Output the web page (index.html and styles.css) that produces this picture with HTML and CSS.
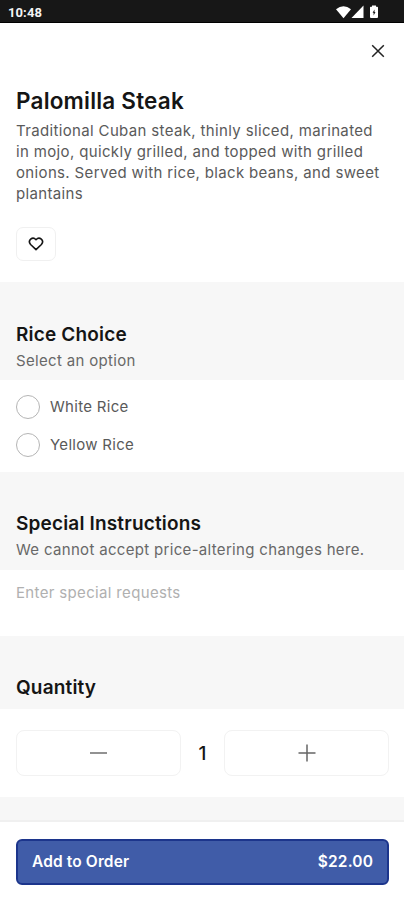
FILE: index.html
```html
<!DOCTYPE html>
<html lang="en">
<head>
<meta charset="utf-8">
<title>Palomilla Steak</title>
<link rel="stylesheet" href="styles.css">
</head>
<body>
<div class="screen">
  <header class="status">
    <span class="clock">10:48</span>
    <svg class="status-icons" width="46" height="16" viewBox="0 0 46 16" fill="#fff">
      <path d="M0 4.2Q7.5 -1.8 15 4.2L7.5 13.2Z"/>
      <path d="M27.5 0.5V13H15.5Z"/>
      <path fill-rule="evenodd" d="M36 .5h4v1.2h1.2q.8 0 .8.8v9.5q0 1-1 1h-6q-1 0-1-1V2.5q0-.8.8-.8H36ZM38.5 4.4L36.6 7.8h1v2.6l1.9-3.5h-1Z"/>
    </svg>
  </header>
  <section class="intro">
    <button class="close" aria-label="Close">
      <svg width="14" height="14" viewBox="0 0 14 14" fill="none" stroke="#222" stroke-width="1.5"><path d="M1.2 1.2L12.8 12.8M12.8 1.2L1.2 12.8"/></svg>
    </button>
    <h1>Palomilla Steak</h1>
    <p class="description">Traditional Cuban steak, thinly sliced, marinated<br>in mojo, quickly grilled, and topped with grilled<br>onions. Served with rice, black beans, and sweet<br>plantains</p>
    <button class="favorite" aria-label="Favorite">
      <svg width="16" height="14" viewBox="0 0 16 14" fill="none" stroke="#151515" stroke-width="1.6" stroke-linejoin="round"><path d="M8 12.7L2.6 7.5C-.8 3.5 4.5-1 8 2.7C11.5-1 16.8 3.5 13.4 7.5Z"/></svg>
    </button>
  </section>
  <section class="heading heading-first">
    <h2>Rice Choice</h2>
    <p>Select an option</p>
  </section>
  <section class="options">
    <label class="option"><span class="radio"></span><span class="option-label">White Rice</span></label>
    <label class="option"><span class="radio"></span><span class="option-label">Yellow Rice</span></label>
  </section>
  <section class="heading">
    <h2>Special Instructions</h2>
    <p>We cannot accept price-altering changes here.</p>
  </section>
  <section class="requests"><span class="placeholder">Enter special requests</span></section>
  <section class="heading heading-short"><h2>Quantity</h2></section>
  <section class="quantity">
    <button class="step" aria-label="Decrease"><svg class="minus" width="18" height="18" viewBox="0 0 18 18" stroke="#929292" stroke-width="2"><path d="M0 9H17"/></svg></button>
    <span class="count">1</span>
    <button class="step" aria-label="Increase"><svg width="18" height="18" viewBox="0 0 18 18" stroke="#666" stroke-width="1.5"><path d="M.5 9H17.5M9 .5V17.5"/></svg></button>
  </section>
  <div class="gap"></div>
  <footer class="footer">
    <button class="add"><span class="add-label">Add to Order</span><span class="price">$22.00</span></button>
  </footer>
</div>
</body>
</html>
```
FILE: styles.css
```css
* { box-sizing: border-box; }
body { margin: 0; background: #fff; font-family: Inter, "Liberation Sans", sans-serif; color: #151515; }
button { font: inherit; color: inherit; padding: 0; background: #fff; border: 0; }
svg { display: block; }
h1, h2, p { margin: 0; white-space: nowrap; }
.screen { width: 404px; height: 900px; display: flex; flex-direction: column; overflow: hidden; }
.status { height: 23px; flex: none; display: flex; justify-content: space-between; background: #171717; border-bottom: 1px solid #000; padding: 5px 22px 0 8px; }
.clock { font: 700 13px/16px Roboto, sans-serif; letter-spacing: .1px; color: #f4f4f4; }
.intro { height: 259px; flex: none; display: flex; flex-direction: column; align-items: flex-start; padding: 14px 16px 0; }
.close { width: 28px; height: 28px; align-self: flex-end; margin-right: -4px; display: grid; place-items: center; }
h1 { margin-top: 20px; font-size: 22.5px; line-height: 32px; font-weight: 600; letter-spacing: .2px; }
.description { margin-top: 3px; font-size: 15px; line-height: 21px; font-weight: 400; letter-spacing: .35px; color: #5a5a5a; }
.favorite { width: 40px; height: 34px; margin-top: 23px; display: grid; place-items: center; border: 1px solid #f0f0f0; border-radius: 7px; }
.heading { height: 98px; flex: none; background: #f7f7f7; padding: 39px 16px 0; }
.heading-first { padding-top: 40px; }
h2 { font-size: 19px; line-height: 26px; font-weight: 600; letter-spacing: .17px; }
.heading p { margin-top: 2px; font-size: 15px; line-height: 21px; font-weight: 400; letter-spacing: .32px; color: #686868; }
.heading-short { height: 73px; }
.options { height: 92px; flex: none; padding: 15px 16px 0; display: flex; flex-direction: column; gap: 14px; }
.option { display: flex; align-items: center; gap: 10px; height: 24px; font-size: 15px; line-height: 22px; font-weight: 400; letter-spacing: .3px; color: #5a5a5a; }
.option-label { padding-bottom: 1px; }
.option:last-child .option-label { padding-bottom: 0; }
.radio { width: 24px; height: 24px; border: 1px solid #b5b5b5; border-radius: 50%; }
.requests { height: 66px; flex: none; padding: 12px 16px; font-size: 15px; line-height: 21px; font-weight: 400; letter-spacing: .34px; color: #b0b0b0; }
.quantity { height: 88px; flex: none; padding: 21px 15px 0 16px; display: flex; align-items: flex-start; }
.step { flex: 1; height: 46px; display: grid; place-items: center; border: 1px solid #f2f2f2; border-radius: 8px; }
.count { width: 43px; text-align: center; font-size: 19px; line-height: 47px; font-weight: 500; }
.gap { height: 25px; flex: none; background: #f7f7f7; border-bottom: 2px solid #f0f0f0; }
.footer { height: 78px; padding: 17px 15px 0 16px; }
.add { width: 100%; height: 46px; display: flex; align-items: center; justify-content: space-between; padding: 0 14px 1px; background: #405ca8; border: 2px solid #1c358c; border-radius: 6px; color: #fff; font-size: 15.5px; font-weight: 600; letter-spacing: .13px; }
```
